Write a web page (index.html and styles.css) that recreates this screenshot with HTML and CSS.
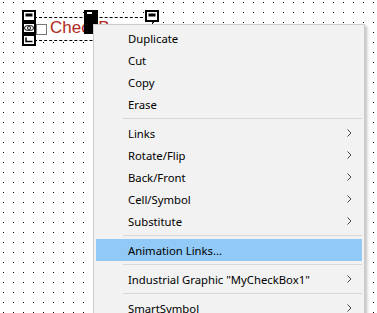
FILE: index.html
```html
<!DOCTYPE html>
<html lang="en">
<head>
  <meta charset="UTF-8" />
  <title>Canvas context menu</title>
  <link rel="stylesheet" href="styles.css">
</head>
<body>
  <div class="canvas">
    <div class="symbol">
      <div class="sel-box"></div>
      <div class="cb-box"></div>
      <span class="cb-label">CheckBox</span>

      <svg class="handle h-tl" width="14" height="12" viewBox="0 0 14 12">
        <rect x="0" y="0" width="14" height="12" fill="#000"/>
        <rect x="2" y="2" width="10" height="8" fill="#fff"/>
        <rect x="3.5" y="3.5" width="7" height="3" fill="#000"/>
      </svg>
      <svg class="handle h-ml" width="14" height="12" viewBox="0 0 14 12">
        <rect x="0" y="0" width="14" height="12" fill="#000"/>
        <rect x="2" y="2" width="10" height="8" fill="#fff"/>
        <ellipse cx="5.5" cy="6" rx="3" ry="2.4" fill="none" stroke="#000"/>
        <ellipse cx="8.5" cy="6" rx="3" ry="2.4" fill="none" stroke="#000"/>
      </svg>
      <svg class="handle h-bl" width="14" height="12" viewBox="0 0 14 12">
        <rect x="0" y="0" width="14" height="12" fill="#000"/>
        <rect x="2" y="2" width="10" height="8" fill="#fff"/>
        <path d="M4 3.5 V7.5 H10.5" fill="none" stroke="#000" stroke-width="1.5"/>
      </svg>
      <svg class="handle h-tm" width="14" height="12" viewBox="0 0 14 12">
        <rect x="0" y="0" width="14" height="12" fill="#000"/>
        <rect x="3" y="2" width="5" height="2" fill="#fff"/>
      </svg>
      <svg class="handle h-mm" width="14" height="12" viewBox="0 0 14 12">
        <rect x="0" y="0" width="14" height="12" fill="#000"/>
      </svg>
      <svg class="handle h-tr" width="14" height="12" viewBox="0 0 14 12">
        <rect x="0" y="0" width="14" height="12" fill="#000"/>
        <rect x="2" y="2" width="10" height="8" fill="#fff"/>
        <rect x="3.5" y="3.5" width="7" height="3" fill="#000"/>
      </svg>
    </div>
  </div>

  <div class="menu">
    <div class="item">Duplicate</div>
    <div class="item">Cut</div>
    <div class="item">Copy</div>
    <div class="item">Erase</div>
    <div class="sep"></div>
    <div class="item sub">Links <svg class="chev" width="5" height="8" viewBox="0 0 5 8"><path d="M0.5 0.5 L4 4 L0.5 7.5" fill="none" stroke="#444"/></svg></div>
    <div class="item sub">Rotate/Flip <svg class="chev" width="5" height="8" viewBox="0 0 5 8"><path d="M0.5 0.5 L4 4 L0.5 7.5" fill="none" stroke="#444"/></svg></div>
    <div class="item sub">Back/Front <svg class="chev" width="5" height="8" viewBox="0 0 5 8"><path d="M0.5 0.5 L4 4 L0.5 7.5" fill="none" stroke="#444"/></svg></div>
    <div class="item sub">Cell/Symbol <svg class="chev" width="5" height="8" viewBox="0 0 5 8"><path d="M0.5 0.5 L4 4 L0.5 7.5" fill="none" stroke="#444"/></svg></div>
    <div class="item sub">Substitute <svg class="chev" width="5" height="8" viewBox="0 0 5 8"><path d="M0.5 0.5 L4 4 L0.5 7.5" fill="none" stroke="#444"/></svg></div>
    <div class="sep"></div>
    <div class="item active">Animation Links...</div>
    <div class="sep"></div>
    <div class="item sub">Industrial Graphic "MyCheckBox1" <svg class="chev" width="5" height="8" viewBox="0 0 5 8"><path d="M0.5 0.5 L4 4 L0.5 7.5" fill="none" stroke="#444"/></svg></div>
    <div class="sep"></div>
    <div class="item sub">SmartSymbol <svg class="chev" width="5" height="8" viewBox="0 0 5 8"><path d="M0.5 0.5 L4 4 L0.5 7.5" fill="none" stroke="#444"/></svg></div>
  </div>
</body>
</html>
```

FILE: styles.css
```css
html, body {
  margin: 0;
  height: 100%;
}

body {
  width: 377px;
  height: 313px;
  overflow: hidden;
  position: relative;
  background-color: #fff;
  background-image: conic-gradient(from 270deg at 1px 1px, #000 90deg, transparent 0);
  background-size: 10px 10px;
  background-position: 3px 2px;
  font-family: "Noto Sans", "Open Sans", sans-serif;
}

.canvas {
  position: absolute;
  left: 0;
  top: 0;
}

.symbol {
  position: absolute;
  left: 22px;
  top: 10px;
  width: 138px;
  height: 36px;
}

.sel-box {
  position: absolute;
  left: 7px;
  top: 7px;
  width: 122px;
  height: 22px;
  border: 1px dashed #000;
  background: #fff;
}

.cb-box {
  position: absolute;
  left: 14px;
  top: 14px;
  width: 9px;
  height: 9px;
  border: 1px solid #777;
  background: #fff;
}

.cb-label {
  position: absolute;
  left: 28px;
  top: 7px;
  font-family: "Liberation Sans", Arial, sans-serif;
  font-size: 17px;
  line-height: 22px;
  color: #b0281c;
}

.handle {
  position: absolute;
  display: block;
}

.h-tl { left: 0; top: 0; }
.h-ml { left: 0; top: 12px; }
.h-bl { left: 0; top: 24px; }
.h-tm { left: 62px; top: 0; }
.h-mm { left: 62px; top: 12px; }
.h-tr { left: 123px; top: 0; }

.menu {
  position: absolute;
  left: 93px;
  top: 24px;
  width: 266px;
  padding: 2px;
  background: #f2f2f2;
  border: 1px solid #cccccc;
  box-shadow: 2px 2px 3px rgba(0, 0, 0, 0.25);
  font-size: 11.3px;
  color: #000;
}

.item {
  height: 22px;
  padding: 0 10px 0 32px;
  display: flex;
  align-items: center;
  justify-content: space-between;
  white-space: nowrap;
}

.item.active {
  background: #91c9f7;
}

.chev {
  display: block;
}

.sep {
  height: 7px;
  display: flex;
  align-items: center;
  padding-left: 27px;
}

.sep::after {
  content: "";
  flex: 1;
  height: 1px;
  background: #d7d7d7;
}
```
